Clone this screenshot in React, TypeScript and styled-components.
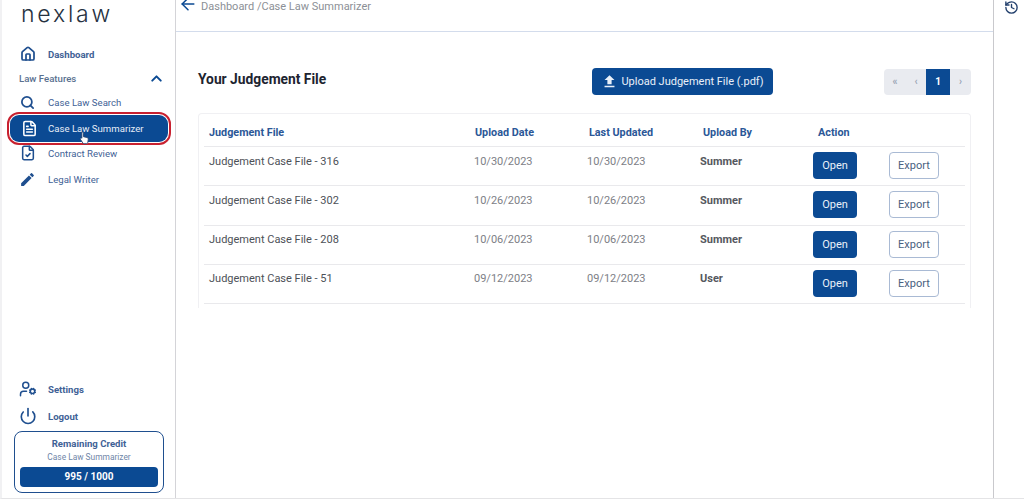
import React from 'react';
import styled, {createGlobalStyle} from 'styled-components';
import {ArrowLeft, ChevronUp, FileCheck, FileText, History, House, Power, Search, UserCog} from 'lucide-react';
import {MdEdit, MdFileUpload} from 'react-icons/md';

const navy = '#0b4a93';
const navText = '#3f6296';

const files = [
    {name: 'Judgement Case File - 316', uploaded: '10/30/2023', updated: '10/30/2023', by: 'Summer'},
    {name: 'Judgement Case File - 302', uploaded: '10/26/2023', updated: '10/26/2023', by: 'Summer'},
    {name: 'Judgement Case File - 208', uploaded: '10/06/2023', updated: '10/06/2023', by: 'Summer'},
    {name: 'Judgement Case File - 51', uploaded: '09/12/2023', updated: '09/12/2023', by: 'User'},
];

const Global = createGlobalStyle`
  html, body {
    margin: 0;
    padding: 0;
    background: #fff;
  }

  body {
    font-family: Roboto, "Liberation Sans", sans-serif;
  }

  * {
    box-sizing: border-box;
  }
`;

export default function App() {
    return (
        <Page>
            <Global/>
            <Sidebar>
                <Logo>nexlaw</Logo>
                <NavItem $bold>
                    <IconSlot><House size={16} strokeWidth={2.6}/></IconSlot>
                    Dashboard
                </NavItem>
                <SectionRow>
                    Law Features
                    <ChevronUp size={17} strokeWidth={2.8} color={navy}/>
                </SectionRow>
                <NavItem $top={10}>
                    <IconSlot><Search size={15} strokeWidth={2.8}/></IconSlot>
                    Case Law Search
                </NavItem>
                <ActiveOutline>
                    <ActiveItem>
                        <ActiveIcon><FileText size={17} strokeWidth={2.2}/></ActiveIcon>
                        Case Law Summarizer
                    </ActiveItem>
                    <Cursor viewBox="0 0 12 16">
                        <path
                            d="M3.5 1.2c.8 0 1.3.6 1.3 1.3v4l4 .9c1 .3 1.6 1 1.5 2l-.5 3.6c-.1.9-.8 1.5-1.7 1.5H5.500c-.6 0-1.100-.3-1.400-.8L1.300 9.400c-.3-.6 0-1.200.5-1.400.500-.2 1-.100 1.200.3V2.500c0-.7-.2-1.300.5-1.300z"
                            fill="#fff" stroke="#23406d" strokeWidth="1"/>
                    </Cursor>
                </ActiveOutline>
                <NavItem $top={1}>
                    <IconSlot><FileCheck size={16} strokeWidth={2.3}/></IconSlot>
                    Contract Review
                </NavItem>
                <NavItem $top={12}>
                    <IconSlot><MdEdit size={17}/></IconSlot>
                    Legal Writer
                </NavItem>

                <BottomGroup>
                    <NavItem $bold>
                        <IconSlot><UserCog size={18} strokeWidth={2}/></IconSlot>
                        Settings
                    </NavItem>
                    <NavItem $bold $top={13}>
                        <IconSlot><Power size={18} strokeWidth={2.2}/></IconSlot>
                        Logout
                    </NavItem>
                    <CreditBox>
                        <CreditTitle>Remaining Credit</CreditTitle>
                        <CreditSub>Case Law Summarizer</CreditSub>
                        <CreditBar>995 / 1000</CreditBar>
                    </CreditBox>
                </BottomGroup>
            </Sidebar>

            <Main>
                <TopBar>
                    <BackArrow><ArrowLeft size={20} strokeWidth={1.8} color={navy}/></BackArrow>
                    <Crumbs>Dashboard /Case Law Summarizer</Crumbs>
                </TopBar>
                <Content>
                    <TitleRow>
                        <Title>Your Judgement File</Title>
                        <UploadButton><MdFileUpload size={17}/> Upload Judgement File (.pdf)</UploadButton>
                        <Pager>
                            <PageCell $w={22}>«</PageCell>
                            <PageCell $w={20}>‹</PageCell>
                            <PageCell $w={24} $current>1</PageCell>
                            <PageCell $w={21}>›</PageCell>
                        </Pager>
                    </TitleRow>
                    <Card>
                        <HeadRow>
                            <span>Judgement File</span>
                            <span>Upload Date</span>
                            <span>Last Updated</span>
                            <span>Upload By</span>
                            <span>Action</span>
                        </HeadRow>
                        {files.map(f => (
                            <FileRow key={f.name}>
                                <FileName>{f.name}</FileName>
                                <DateCell>{f.uploaded}</DateCell>
                                <DateCell>{f.updated}</DateCell>
                                <ByCell>{f.by}</ByCell>
                                <OpenButton>Open</OpenButton>
                                <ExportButton>Export</ExportButton>
                            </FileRow>
                        ))}
                    </Card>
                </Content>
            </Main>

            <RightRail>
                <History size={15} strokeWidth={2.2} color="#23406d"/>
            </RightRail>
        </Page>
    );
}

const Page = styled.div`
  display: grid;
  grid-template-columns: 174px 818px 1fr;
  width: 1024px;
  height: 499px;
  border-left: 2px solid #f1f1f3;
  border-bottom: 1px solid #e4e4e6;
  overflow: hidden;
`;

const Sidebar = styled.aside`
  display: flex;
  flex-direction: column;
  border-right: 1px solid #d4d4d8;
  padding: 0 2px 5px 5px;
`;

const Logo = styled.div`
  height: 47px;
  padding-left: 14px;
  font-family: Inter, sans-serif;
  font-size: 23px;
  font-weight: 300;
  letter-spacing: 2.8px;
  line-height: 28px;
  color: #26313f;
`;

const NavItem = styled.div<{ $bold?: boolean; $top?: number }>`
  display: flex;
  align-items: center;
  height: 14px;
  margin-top: ${p => p.$top ?? 0}px;
  color: ${navText};
  font-size: 9.600px;
  font-weight: ${p => (p.$bold ? 700 : 400)};
`;

const IconSlot = styled.span`
  display: flex;
  justify-content: center;
  width: 41px;
  color: #1f4f8f;
`;

const SectionRow = styled.div`
  display: flex;
  align-items: center;
  justify-content: space-between;
  height: 14px;
  margin-top: 10px;
  padding: 0 8px 0 12px;
  color: #59708f;
  font-size: 9.600px;
  font-weight: 500;
`;

const ActiveOutline = styled.div`
  position: relative;
  width: 164px;
  height: 33px;
  margin-top: 3px;
  padding: 1px;
  border: 2px solid #c8202f;
  border-radius: 12px;
`;

const ActiveItem = styled.div`
  display: flex;
  align-items: center;
  height: 100%;
  border-radius: 9px;
  background: ${navy};
  color: #e6edf7;
  font-size: 9.600px;
`;

const ActiveIcon = styled.span`
  display: flex;
  justify-content: center;
  width: 38px;
  padding-left: 1px;
  color: #fff;
`;

const Cursor = styled.svg`
  position: absolute;
  left: 70px;
  top: 17px;
  width: 11px;
  height: 14px;
`;

const BottomGroup = styled.div`
  margin-top: auto;
  display: flex;
  flex-direction: column;
`;

const CreditBox = styled.div`
  display: flex;
  flex-direction: column;
  align-items: center;
  width: 150px;
  height: 62px;
  margin: 8px 0 0 7px;
  padding: 6px 5px 0;
  border: 1px solid #1f4f8f;
  border-radius: 8px;
`;

const CreditTitle = styled.div`
  color: #3f6296;
  font-size: 9.600px;
  font-weight: 700;
  line-height: 12px;
`;

const CreditSub = styled.div`
  margin-top: 2px;
  color: #6f86a8;
  font-size: 8.400px;
  line-height: 11px;
`;

const CreditBar = styled.div`
  width: 100%;
  height: 20px;
  margin-top: 4px;
  border-radius: 4px;
  background: ${navy};
  color: #fff;
  font-size: 10px;
  font-weight: 700;
  line-height: 20px;
  text-align: center;
`;

const Main = styled.main`
  display: flex;
  flex-direction: column;
  border-right: 1px solid #c9c9cd;
`;

const TopBar = styled.div`
  display: flex;
  align-items: flex-start;
  gap: 3px;
  height: 32px;
  padding-left: 2px;
  border-bottom: 1px solid #d3dcec;
  color: #8b8f96;
`;

const BackArrow = styled.span`
  display: flex;
  margin-top: -6px;
`;

const Crumbs = styled.span`
  font-size: 11px;
  line-height: 13px;
`;

const Content = styled.div`
  padding: 36px 22px 0;
`;

const TitleRow = styled.div`
  display: flex;
  align-items: center;
  height: 27px;
  margin-bottom: 18px;
`;

const Title = styled.h2`
  width: 394px;
  margin: 0 0 5px;
  color: #1d2430;
  font-size: 13.800px;
  font-weight: 700;
`;

const UploadButton = styled.button`
  display: flex;
  align-items: center;
  justify-content: center;
  gap: 3px;
  width: 181px;
  height: 27px;
  padding: 0;
  border: 0;
  border-radius: 4px;
  background: ${navy};
  color: #e9f0f9;
  font-family: inherit;
  font-size: 11px;
`;

const Pager = styled.div`
  display: flex;
  height: 26px;
  margin-left: auto;
  border-radius: 4px;
  overflow: hidden;
  background: #e9ebf0;
`;

const PageCell = styled.div<{ $current?: boolean; $w: number }>`
  width: ${p => p.$w}px;
  background: ${p => (p.$current ? navy : 'transparent')};
  color: ${p => (p.$current ? '#fff' : '#9aa4b5')};
  font-size: 10px;
  font-weight: 700;
  line-height: 26px;
  text-align: center;
`;

const Card = styled.section`
  width: 773px;
  height: 195px;
  padding: 0 5px;
  border: 1px solid #f0f0f3;
  border-bottom: 0;
  border-radius: 4px 4px 0 0;
`;

const HeadRow = styled.div`
  display: grid;
  grid-template-columns: 266px 114px 114px 115px 1fr;
  align-items: center;
  height: 33px;
  padding: 4px 0 0 5px;
  border-bottom: 1px solid #e9e9ec;
  color: #2b5797;
  font-size: 10.800px;
  font-weight: 700;
`;

const FileRow = styled.div`
  display: grid;
  grid-template-columns: 270px 113px 113px 113px 76px 50px;
  height: 39.300px;
  padding-top: 5px;
  border-bottom: 1px solid #e9e9ec;
`;

const FileName = styled.span`
  padding: 2.500px 0 0 5px;
  color: #4d5157;
  font-size: 11px;
`;

const DateCell = styled.span`
  padding-top: 2.500px;
  color: #7d8086;
  font-size: 11px;
`;

const ByCell = styled.span`
  padding-top: 2.500px;
  color: #55585e;
  font-size: 11px;
  font-weight: 700;
`;

const OpenButton = styled.button`
  width: 44px;
  height: 27px;
  padding: 0;
  border: 0;
  border-radius: 4px;
  background: ${navy};
  color: #e9f0f9;
  font-family: inherit;
  font-size: 11px;
`;

const ExportButton = styled.button`
  width: 50px;
  height: 27px;
  padding: 0;
  border: 1px solid #a9bad4;
  border-radius: 4px;
  background: #fff;
  color: #4a5f80;
  font-family: inherit;
  font-size: 11px;
`;

const RightRail = styled.aside`
  padding: 0 0 0 10px;
`;
